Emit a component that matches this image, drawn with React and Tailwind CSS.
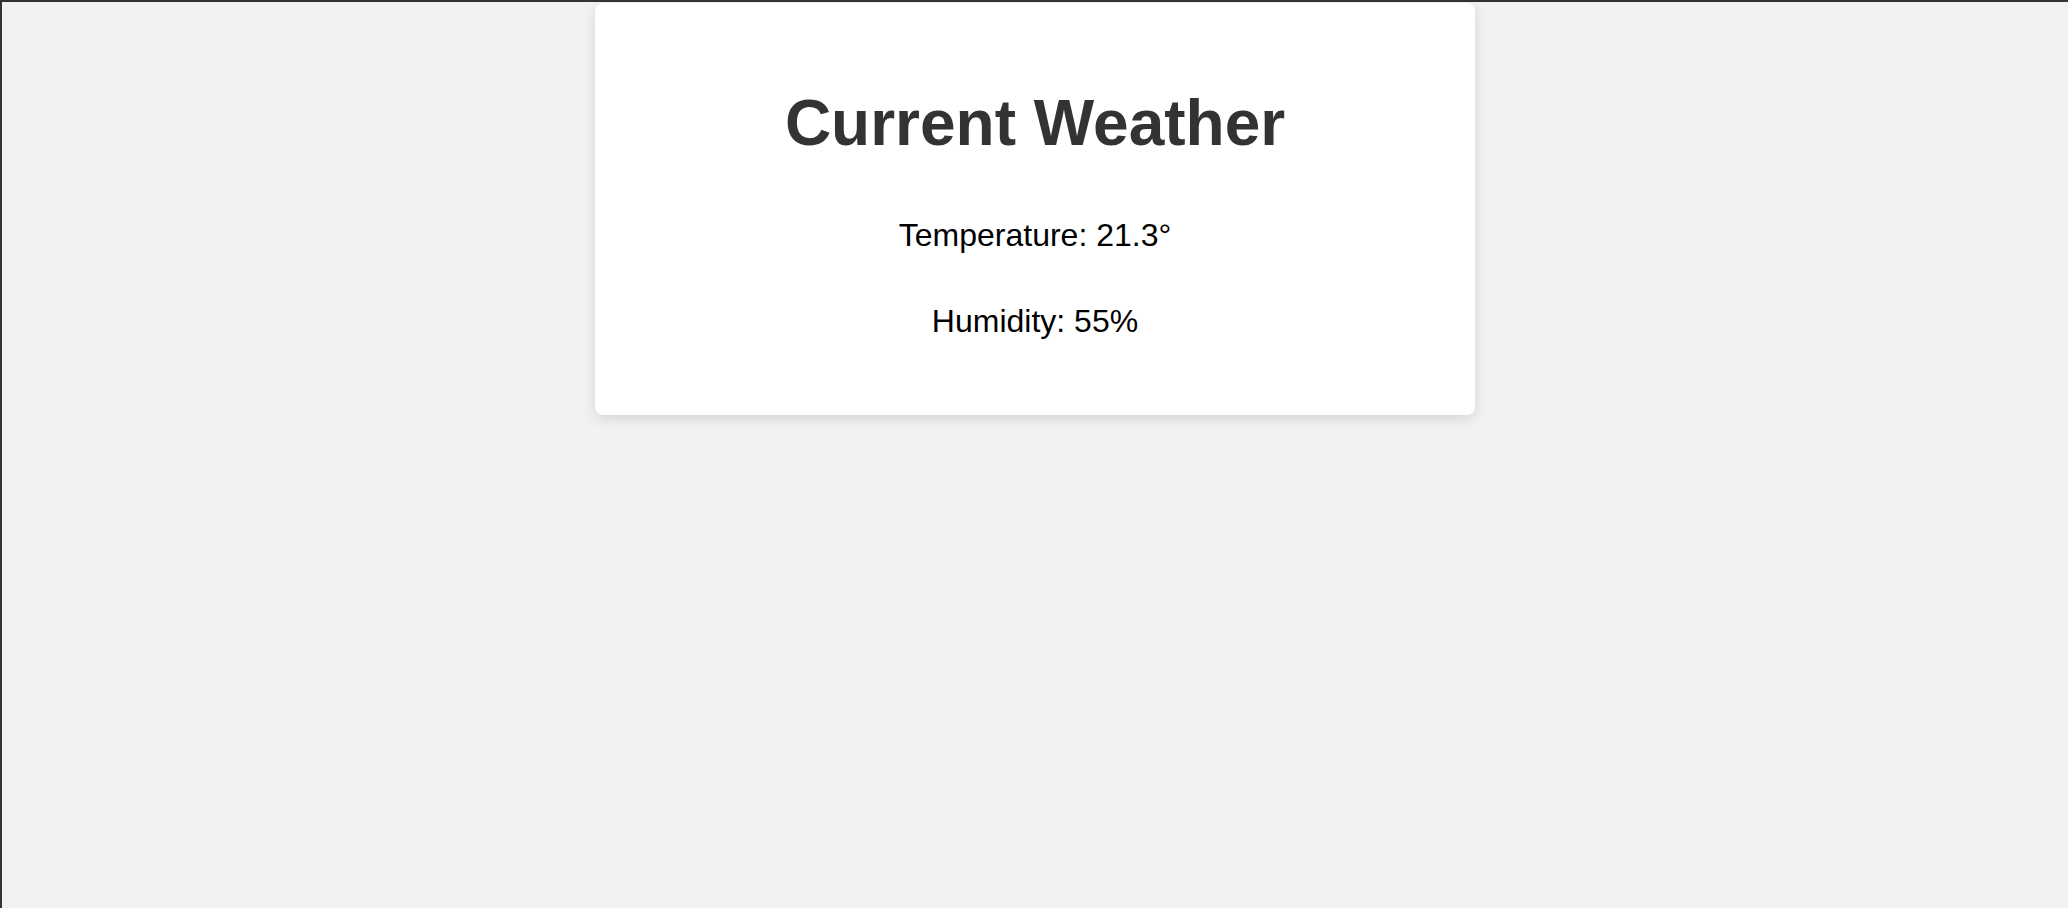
export default function App() {
  return (
    <div
      className="h-screen w-full overflow-hidden border-t-2 border-l-2 border-[#333] bg-[#f2f2f2]"
      style={{ fontFamily: '"Liberation Sans", Arial, sans-serif' }}
    >
      <div className="mx-auto mt-px w-[880px] rounded-lg bg-white pt-[84px] pb-[76px] text-center shadow-[0_4px_14px_rgba(0,0,0,0.12)]">
        <h1 className="text-[64px] font-bold leading-[72px] text-[#333]">Current Weather</h1>
        <p className="mt-[58px] text-[32px] leading-[36px] text-black">Temperature: 21.3°</p>
        <p className="mt-[50px] text-[32px] leading-[36px] text-black">Humidity: 55%</p>
      </div>
    </div>
  );
}
